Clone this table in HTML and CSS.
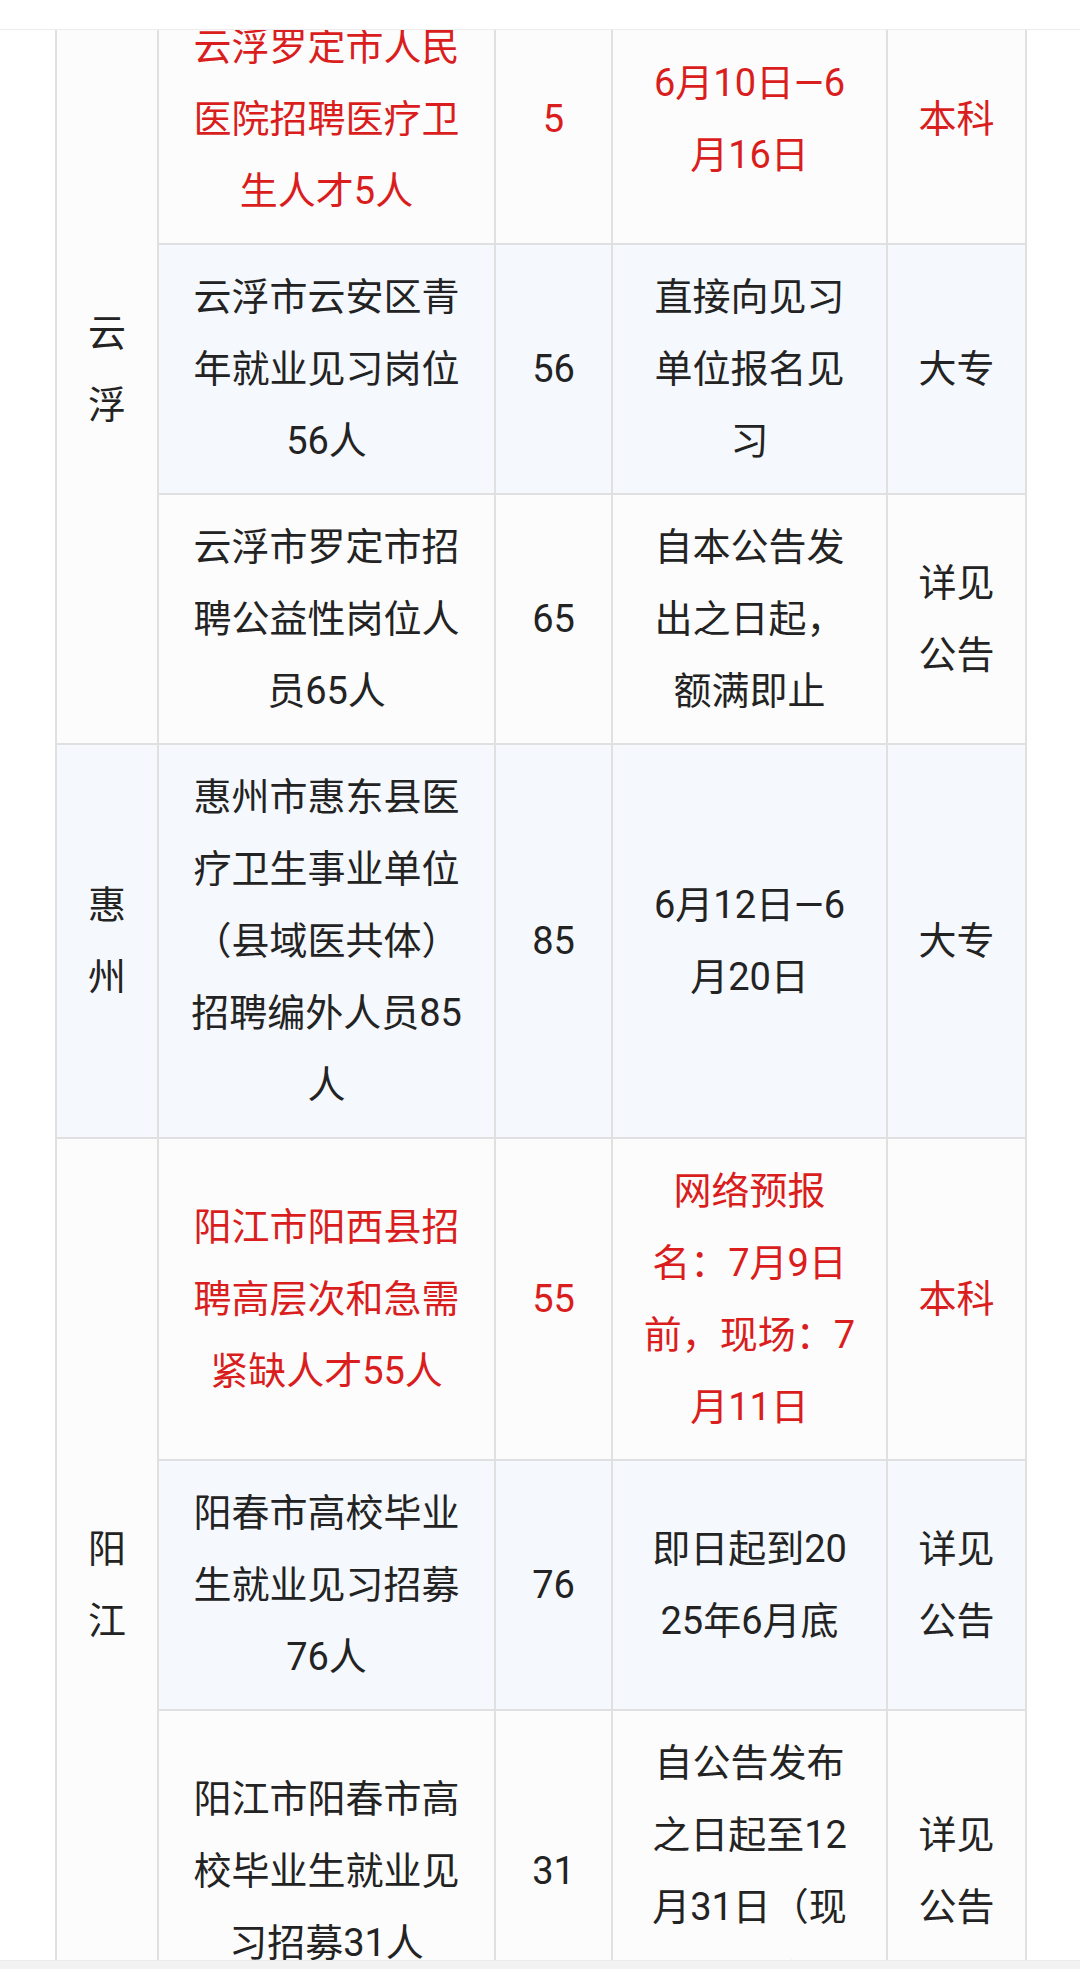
FILE: index.html
```html
<!DOCTYPE html>
<html lang="zh-CN">
<head>
<meta charset="utf-8">
<title>招聘信息表</title>
<link rel="stylesheet" href="styles.css">
</head>
<body>
<div class="screen">
  <div class="topbar"></div>
  <div class="viewport">
    <table class="grid">
      <colgroup>
        <col class="c-region">
        <col class="c-name">
        <col class="c-count">
        <col class="c-date">
        <col class="c-edu">
      </colgroup>
      <tbody>
        <tr class="odd">
          <td class="region" rowspan="3">云<br>浮</td>
          <td class="red">云浮罗定市人民<br>医院招聘医疗卫<br>生人才5人</td>
          <td class="red">5</td>
          <td class="red">6月10日—6<br>月16日</td>
          <td class="red">本科</td>
        </tr>
        <tr class="even">
          <td>云浮市云安区青<br>年就业见习岗位<br>56人</td>
          <td>56</td>
          <td>直接向见习<br>单位报名见<br>习</td>
          <td>大专</td>
        </tr>
        <tr class="odd">
          <td>云浮市罗定市招<br>聘公益性岗位人<br>员65人</td>
          <td>65</td>
          <td>自本公告发<br>出之日起，<br>额满即止</td>
          <td>详见<br>公告</td>
        </tr>
        <tr class="even">
          <td class="region">惠<br>州</td>
          <td>惠州市惠东县医<br>疗卫生事业单位<br>（县域医共体）<br>招聘编外人员85<br>人</td>
          <td>85</td>
          <td>6月12日—6<br>月20日</td>
          <td>大专</td>
        </tr>
        <tr class="odd">
          <td class="region" rowspan="3">阳<br>江</td>
          <td class="red">阳江市阳西县招<br>聘高层次和急需<br>紧缺人才55人</td>
          <td class="red">55</td>
          <td class="red">网络预报<br>名：7月9日<br>前，现场：7<br>月11日</td>
          <td class="red">本科</td>
        </tr>
        <tr class="even">
          <td>阳春市高校毕业<br>生就业见习招募<br>76人</td>
          <td>76</td>
          <td>即日起到20<br>25年6月底</td>
          <td>详见<br>公告</td>
        </tr>
        <tr class="odd">
          <td>阳江市阳春市高<br>校毕业生就业见<br>习招募31人</td>
          <td>31</td>
          <td>自公告发布<br>之日起至12<br>月31日（现<br>场报名）</td>
          <td>详见<br>公告</td>
        </tr>
      </tbody>
    </table>
  </div>
  <div class="bottombar"></div>
</div>
</body>
</html>
```

FILE: styles.css
```css
html, body {
  margin: 0;
  padding: 0;
  background: #ffffff;
}

.screen {
  width: 1080px;
  height: 1969px;
  display: flex;
  flex-direction: column;
  overflow: hidden;
  font-family: Roboto, "Noto Sans CJK SC", "Noto Sans", sans-serif;
}

.topbar {
  height: 29px;
  flex: none;
  background: #ffffff;
  border-bottom: 1px solid #ececec;
}

.viewport {
  height: 1930px;
  flex: none;
  overflow: hidden;
}

.bottombar {
  flex: 1;
  background: #f2f2f2;
  border-top: 1px solid #ebebeb;
}

.grid {
  border-collapse: collapse;
  table-layout: fixed;
  width: 970px;
  margin: -37px 0 0 55px;
  color: #232323;
  font-size: 38px;
  line-height: 72px;
}

.c-region { width: 102px; }
.c-name { width: 337px; }
.c-count { width: 117px; }
.c-date { width: 275px; }
.c-edu { width: 139px; }

.grid td {
  border: 2px solid #e0e0e0;
  padding: 16px 0;
  text-align: center;
  vertical-align: middle;
  white-space: nowrap;
}

.grid tr.odd td {
  background: #fcfcfc;
}

.grid tr.even td {
  background: #f5f8fc;
}

.grid td.red {
  color: #da1d1d;
}
```
